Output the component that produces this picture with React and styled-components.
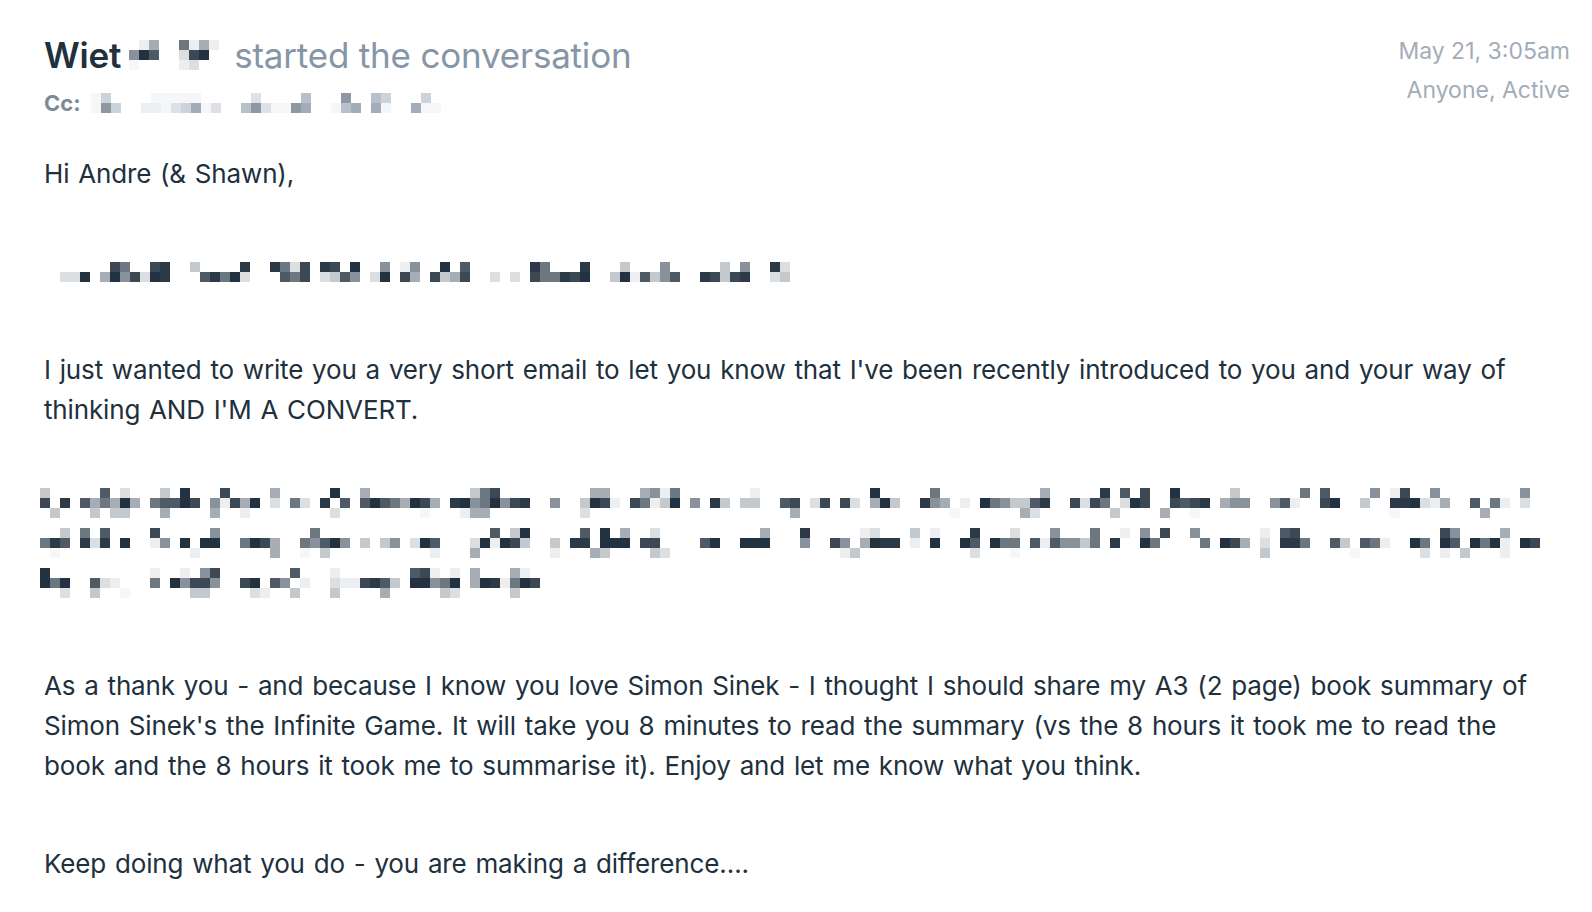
import React from 'react';
import styled, { createGlobalStyle } from 'styled-components';

const GlobalStyle = createGlobalStyle`
  html, body {
    margin: 0;
    padding: 0;
    background: #ffffff;
  }
  body {
    font-family: Inter, "Noto Sans", "Liberation Sans", sans-serif;
    color: #21303d;
    -webkit-font-smoothing: antialiased;
  }
`;

const Page = styled.div`
  padding: 31px 22px 0 44px;
`;

const Header = styled.header`
  display: flex;
  justify-content: space-between;
  align-items: flex-start;
`;

const Title = styled.h1`
  margin: 0;
  font-size: 35px;
  line-height: 48px;
  font-weight: 400;
  letter-spacing: -0.2px;
  display: flex;
  align-items: center;
  gap: 8px;
`;

const Name = styled.span`
  font-weight: 600;
  color: #21303d;
`;

const Muted = styled.span`
  color: #8696a6;
  margin-left: -3px;
`;

const CcRow = styled.div`
  display: flex;
  align-items: center;
  gap: 10px;
  margin-top: 11px;
  font-size: 22px;
  line-height: 26px;
  font-weight: 700;
  color: #7d8995;
`;

const Meta = styled.div`
  text-align: right;
  padding-top: 1px;
  font-size: 23px;
  line-height: 39px;
  color: #a2adb9;
`;

const Body = styled.div`
  margin-top: 38px;
  font-size: 26px;
  line-height: 40px;
  word-spacing: 1.7px;
  letter-spacing: -0.15px;
  max-width: 1500px;
`;

const Para = styled.p`
  margin: 0 0 58px;

  &:last-child {
    margin-bottom: 30px;
  }
`;

const Redacted = styled.div`
  margin: 0 0 58px ${(p) => p.$indent || 0}px;
  display: flex;
  flex-direction: column;
`;

const MosaicLine = styled.svg`
  display: block;
  height: 40px;
  flex: none;
`;

const InlineMosaic = styled.svg`
  display: block;
  flex: none;
`;

const tones = ['#223240', '#2c3a47', '#3c4955', '#4e5a66', '#6c7780', '#89929b', '#a6adb4', '#c4c9ce', '#dcdfe2', '#eceef0', '#f6f7f8'];
const lightTones = ['#8e98a3', '#a3adb8', '#b8c0c9', '#cdd3da', '#dde1e6', '#eceff2', '#f5f6f8'];

function rng(seed) {
  let s = seed >>> 0;
  return () => {
    s = (s * 1664525 + 1013904223) >>> 0;
    return s / 4294967296;
  };
}

// fake redacted words: a dense middle band with sparse ascender/descender cells
function buildCells(cols, seed, rows, topChance) {
  const rand = rng(seed);
  const cells = [];
  let c = 0;
  while (c < cols) {
    const len = 2 + Math.floor(rand() * 7);
    for (let i = 0; i < len && c < cols; i += 1, c += 1) {
      if (rand() > 0.12) {
        cells.push({ x: c, y: 1, t: Math.floor(Math.pow(rand(), 1.3) * 10) });
      }
      if (rand() < topChance) cells.push({ x: c, y: 0, t: Math.floor(rand() * 10) });
      if (rows === 3 && rand() < 0.22) cells.push({ x: c, y: 2, t: 6 + Math.floor(rand() * 5) });
    }
    c += 1 + Math.floor(rand() * 1.6);
  }
  return cells;
}

function Mosaic({ cols, seed, rows = 3, top = 0, topChance = 0.28 }) {
  const cells = buildCells(cols, seed, rows, topChance);
  return (
    <MosaicLine width={cols * 10} viewBox={`0 0 ${cols * 10} 40`}>
      {cells.map((cell) => (
        <rect
          key={`${cell.x}-${cell.y}`}
          x={cell.x * 10}
          y={top + cell.y * 10}
          width="10"
          height="10"
          fill={tones[Math.min(cell.t, tones.length - 1)]}
        />
      ))}
    </MosaicLine>
  );
}

function SmallMosaic({ cols, seed, palette, rows = 2, topChance = 0.5 }) {
  const cells = buildCells(cols, seed, rows, topChance);
  return (
    <InlineMosaic width={cols * 10} height={rows * 10}>
      {cells.map((cell) => (
        <rect
          key={`${cell.x}-${cell.y}`}
          x={cell.x * 10}
          y={cell.y * 10}
          width="10"
          height="10"
          fill={palette[Math.min(cell.t, palette.length - 1)]}
        />
      ))}
    </InlineMosaic>
  );
}

function App() {
  return (
    <>
      <GlobalStyle />
      <Page>
        <Header>
          <div>
            <Title>
              <Name>Wiet</Name>
              <SmallMosaic cols={10} seed={7} palette={tones} rows={3} topChance={0.7} />
              <Muted>started the conversation</Muted>
            </Title>
            <CcRow>
              Cc:
              <SmallMosaic cols={35} seed={41} palette={lightTones} rows={2} />
            </CcRow>
          </div>
          <Meta>
            <div>May 21, 3:05am</div>
            <div>Anyone, Active</div>
          </Meta>
        </Header>
        <Body>
          <Para>Hi Andre (&amp; Shawn),</Para>
          <Redacted $indent={16}>
            <Mosaic cols={73} seed={3} rows={2} top={10} topChance={0.55} />
          </Redacted>
          <Para>
            I just wanted to write you a very short email to let you know that I've been recently introduced to you
            and your way of thinking AND I'M A CONVERT.
          </Para>
          <Redacted $indent={-4}>
            <Mosaic cols={149} seed={11} />
            <Mosaic cols={152} seed={23} />
            <Mosaic cols={52} seed={37} />
          </Redacted>
          <Para>
            As a thank you - and because I know you love Simon Sinek - I thought I should share my A3 (2 page) book
            summary of Simon Sinek's the Infinite Game. It will take you 8 minutes to read the summary (vs the 8 hours
            it took me to read the book and the 8 hours it took me to summarise it). Enjoy and let me know what you
            think.
          </Para>
          <Para>Keep doing what you do - you are making a difference….</Para>
        </Body>
      </Page>
    </>
  );
}

export default App;
